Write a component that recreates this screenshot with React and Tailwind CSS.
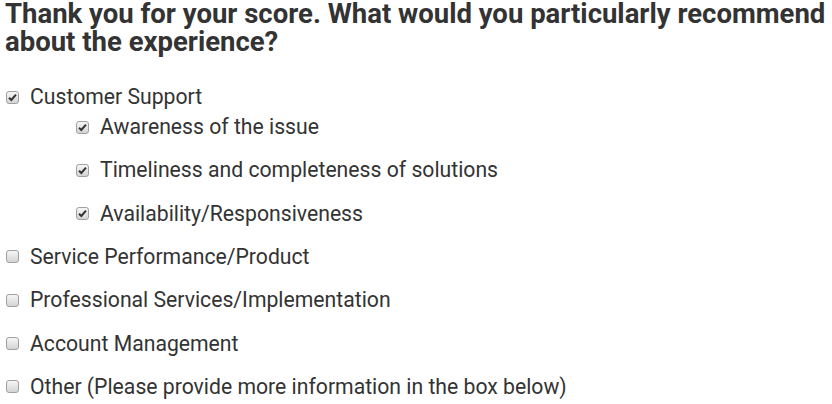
import React from "react";

const Box = ({ checked }) => (
    <span className="relative inline-block w-[13px] h-[13px] shrink-0 rounded-[3px] border border-[#a0a0a0] bg-gradient-to-b from-[#f6f6f6] to-[#d4d4d4]">
        {checked && (
            <svg viewBox="0 0 13 13" className="absolute -left-px -top-px w-[13px] h-[13px]">
                <path d="M3 6.8 L5.3 9 L10 3.6" fill="none" stroke="#333" strokeWidth="2" />
            </svg>
        )}
    </span>
);

const Item = ({ label, checked, sub }) => (
    <div className={`flex items-center h-[20px] ${sub ? "pl-[76px]" : "pl-[6px]"}`}>
        <Box checked={checked} />
        <span className="ml-[11px] whitespace-nowrap">{label}</span>
    </div>
);

export default function App() {
    const others = [
        "Service Performance/Product",
        "Professional Services/Implementation",
        "Account Management",
        "Other (Please provide more information in the box below)",
    ];

    return (
        <div className="bg-white w-[832px] h-[404px] overflow-hidden text-[#333] font-['Roboto',sans-serif]">
            <h2 className="pl-[5px] pr-[4px] text-[27.5px] leading-[28px] font-bold">
                Thank you for your score. What would you particularly recommend about the experience?
            </h2>
            <div className="mt-[31px] text-[21.2px] flex flex-col">
                <Item label="Customer Support" checked />
                <div className="flex flex-col gap-[23.3px] mt-[10px]">
                    <Item label="Awareness of the issue" checked sub />
                    <Item label="Timeliness and completeness of solutions" checked sub />
                    <Item label="Availability/Responsiveness" checked sub />
                    {others.map((o) => (
                        <Item key={o} label={o} />
                    ))}
                </div>
            </div>
        </div>
    );
}
